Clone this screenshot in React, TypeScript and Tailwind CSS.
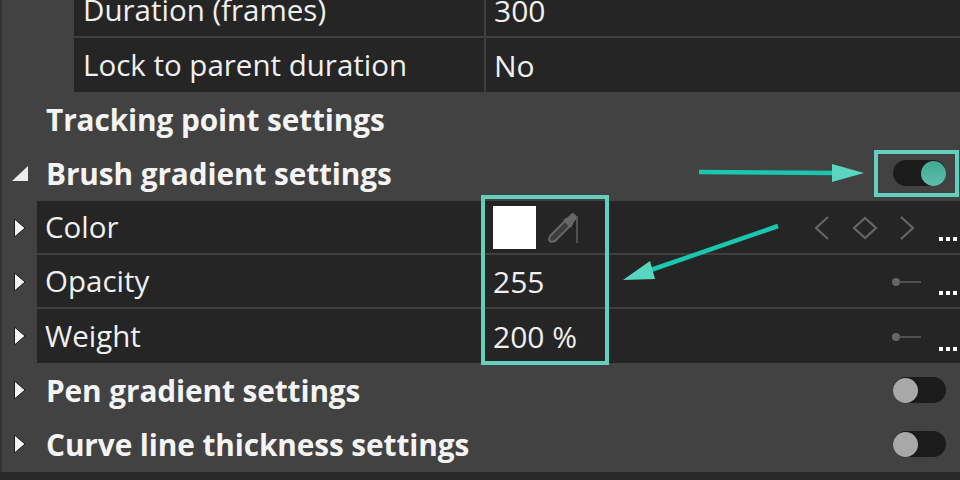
const font = "font-['Open_Sans','Noto_Sans',sans-serif]";

const Caret = ({ open = false }: { open?: boolean }) =>
  open ? (
    <svg width="18" height="18" viewBox="0 0 18 18" className="shrink-0">
      <path d="M1 17 L17 17 L17 2 Z" fill="#ececec" />
    </svg>
  ) : (
    <svg width="13" height="20" viewBox="0 0 13 20" className="shrink-0">
      <path d="M1.5 1 L12 10 L1.5 19 Z" fill="#f4f4f4" stroke="#1b1b1b" strokeWidth="1" />
    </svg>
  );

const Toggle = ({ on = false }: { on?: boolean }) => (
  <div
    className={`flex h-[26px] w-[53px] items-center rounded-full bg-[#1b1b1b] ${on ? 'justify-end' : 'justify-start'}`}
  >
    <div
      className={`h-[25px] w-[25px] rounded-full ${on ? 'bg-gradient-to-b from-[#45a892] to-[#5cc0aa]' : 'bg-[#a8a8a8]'}`}
    />
  </div>
);

const Section = ({ label, caret, open, toggle }: { label: string; caret?: boolean; open?: boolean; toggle?: 'on' | 'off' }) => (
  <div className="flex h-[54px] shrink-0 items-center">
    <div className="flex w-[35px] justify-center">{caret && <Caret open={open} />}</div>
    <span className="ml-[9px] pt-[2px] text-[29.8px] font-bold tracking-[-0.1px] text-[#f4f4f4]">{label}</span>
    {toggle && (
      <div className="ml-auto pr-[14px]">
        <Toggle on={toggle === 'on'} />
      </div>
    )}
  </div>
);

const Dots = () => (
  <span className="flex gap-[3px] pr-[3px]">
    <i className="h-[4px] w-[4px] bg-white" />
    <i className="h-[4px] w-[4px] bg-white" />
    <i className="h-[4px] w-[4px] bg-white" />
  </span>
);

const DotsCell = ({ gap }: { gap: string }) => (
  <div className={`flex h-full items-end pb-[12px] ${gap}`}>
    <Dots />
  </div>
);

const KeyframeTools = () => (
  <div className="ml-auto flex h-full items-center">
    <svg width="112" height="30" viewBox="0 0 112 30" fill="none" stroke="#666" strokeWidth="2.2">
      <path d="M17 4 L5 15 L17 26" />
      <path d="M54 5 L65 15 L54 25 L43 15 Z" />
      <path d="M90 4 L102 15 L90 26" />
    </svg>
  </div>
);

const SliderMark = () => (
  <svg width="32" height="12" viewBox="0 0 32 12" className="ml-auto">
    <circle cx="6" cy="6" r="4" fill="#666" />
    <path d="M8 6 H31" stroke="#5c5c5c" strokeWidth="1.6" />
  </svg>
);

const Eyedropper = () => (
  <svg width="36" height="36" viewBox="0 0 36 36" fill="none" className="ml-[10px]">
    <path d="M3 30 L4 26 L19 11 L24 16 L9 31 L5 32 Z" fill="#3d3d3d" stroke="#666" strokeWidth="2" />
    <path d="M17 10 L25 18 L28 12 L31 8 L29 4 L26 3 L22 7 Z" fill="#666" />
    <path d="M31 6 V33" stroke="#5e5e5e" strokeWidth="1.6" />
  </svg>
);

const PropRow = ({ label, caret, noBorder, children, right }: { label: string; caret?: boolean; noBorder?: boolean; children: React.ReactNode; right?: React.ReactNode }) => (
  <div className="flex h-[54px] shrink-0 items-center">
    {caret && (
      <div className="flex h-full w-[37px] items-center justify-center pl-[1px]">
        <Caret />
      </div>
    )}
    <div className={`flex h-full flex-1 items-center bg-[#252525] text-[#f0f0f0] ${noBorder ? '' : 'border-b-2 border-[#3f3f3f]'}`}>
      <div className={`${caret ? 'w-[447px] pl-[8px]' : 'w-[410px] pl-[9px]'} flex h-full shrink-0 items-center pt-[1px] text-[29.5px]`}>
        {label}
      </div>
      <div className={`flex h-full flex-1 items-center pt-[1px] text-[30px] ${caret ? 'pl-[9px]' : 'border-l-2 border-[#3f3f3f] pl-[8px]'}`}>
        {children}
        {right}
      </div>
    </div>
  </div>
);

const TealBox = ({ className }: { className: string }) => (
  <div className={`pointer-events-none absolute border-[4px] border-[#64cfbc] ${className}`} />
);

export default function App() {
  return (
    <div className={`relative h-[480px] w-[960px] overflow-hidden bg-[#424242] ${font}`}>
      <div className="-mt-[16px] flex h-[488px] flex-col border-l-2 border-[#333]">
        <div className="ml-[72px] shrink-0">
          <PropRow label="Duration (frames)">300</PropRow>
          <PropRow label="Lock to parent duration" noBorder>No</PropRow>
        </div>
        <Section label="Tracking point settings" />
        <Section label="Brush gradient settings" caret open toggle="on" />
        <div className="-ml-[2px] mt-px shrink-0">
          <PropRow label="Color" caret right={<><KeyframeTools /><DotsCell gap="ml-[16px]" /></>}>
            <div className="h-[43px] w-[43px] bg-white" />
            <Eyedropper />
          </PropRow>
          <PropRow label="Opacity" caret right={<><SliderMark /><DotsCell gap="ml-[17px]" /></>}>
            255
          </PropRow>
          <PropRow label="Weight" caret noBorder right={<><SliderMark /><DotsCell gap="ml-[17px]" /></>}>
            200 %
          </PropRow>
        </div>
        <Section label="Pen gradient settings" caret toggle="off" />
        <Section label="Curve line thickness settings" caret toggle="off" />
      </div>
      <div className="h-[8px] bg-[#292929]" />

      <TealBox className="left-[481px] top-[195px] h-[170px] w-[128px]" />
      <TealBox className="left-[874px] top-[150px] h-[47px] w-[85px]" />
      <svg width="960" height="480" viewBox="0 0 960 480" className="pointer-events-none absolute left-0 top-0">
        <path d="M699 172 L835 173" stroke="#19c6ae" strokeWidth="4.5" />
        <path d="M832 164 L864 173 L832 182 Z" fill="#58d6c0" />
        <path d="M778 226 L645 272" stroke="#19c6ae" strokeWidth="4.5" />
        <path d="M623 280 L650 261 L655 279 Z" fill="#58d6c0" />
      </svg>
    </div>
  );
}
